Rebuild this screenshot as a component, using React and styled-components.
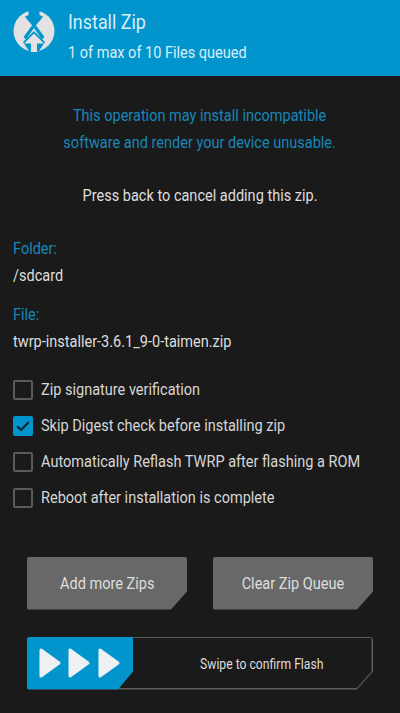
import React from "react";
import styled, { createGlobalStyle } from "styled-components";

const BLUE = "#0295cd";
const DIM = "#1787b9";
const Global = createGlobalStyle`
  html, body { margin: 0; padding: 0; background: #1a1a1a; }
  body { font-family: Roboto, "Liberation Sans", sans-serif; }
`;
const Screen = styled.div`
  width: 400px; height: 713px; background: #1a1a1a; color: #dedede; overflow: hidden;
  display: flex; flex-direction: column;
`;
const Narrow = styled.span`
  display: inline-block; white-space: nowrap; transform: scaleX(0.87);
  transform-origin: ${p => (p.$center ? "center" : "left")};
`;
const Header = styled.header`
  height: 76px; background: ${BLUE}; display: flex; align-items: flex-start;
  padding: 10px 0 0 13px; box-sizing: border-box; gap: 13px; flex: none;
`;
const HeaderText = styled.div`display: flex; flex-direction: column; color: #d9eef7;`;
const Title = styled.div`font-size: 20.6px; line-height: 24px; margin-bottom: 7px;`;
const Subtitle = styled.div`font-size: 16.7px; line-height: 24px;`;
const Warning = styled.div`
  margin-top: 26px; text-align: center; color: ${DIM}; font-size: 16.7px; line-height: 27px;
`;
const Notice = styled.div`margin-top: 28px; text-align: center; font-size: 16.7px; line-height: 24px;`;
const Fields = styled.div`margin-top: 29px; display: flex; flex-direction: column; gap: 15px;`;
const Field = styled.div`
  padding-left: 13px; font-size: 16.7px; line-height: 24px;
  display: flex; flex-direction: column; gap: 2.5px;
`;
const LaterField = styled(Field)`gap: 3px;`;
const Label = styled.div`color: ${DIM};`;
const Options = styled.div`margin-top: 26px; padding-left: 13px; display: flex; flex-direction: column; gap: 16px;`;
const Option = styled.div`display: flex; align-items: center; gap: 8px; height: 20px; font-size: 16.7px; color: #d6d6d6;`;
const Box = styled.span`
  width: 20px; height: 20px; box-sizing: border-box; border-radius: 2px; flex: none;
  border: 2px solid ${p => (p.$on ? BLUE : "#5a5a5a")};
  background: ${p => (p.$on ? BLUE : "transparent")};
  display: flex; align-items: center; justify-content: center;
`;
const Buttons = styled.div`margin-top: 49px; padding: 0 27px; display: flex; justify-content: space-between;`;
const Button = styled.div`
  width: 160px; height: 53px; box-sizing: border-box; padding-top: 1px; background: #686868; color: #dedede; font-size: 16.7px;
  display: flex; align-items: center; justify-content: center; border-radius: 2px;
  clip-path: polygon(0 0, 100% 0, 100% 35px, 144px 100%, 0 100%);
`;
const Track = styled.div`
  position: relative; margin: 27px 0 0 27px; width: 346px; height: 53px; background: #5c5c5c;
  border-radius: 3px; clip-path: polygon(0 0, 100% 0, 100% 35px, 330px 100%, 0 100%);
  display: flex; align-items: center; font-size: 14px;
  &::before {
    content: ""; position: absolute; inset: 1.5px; background: #1a1a1a;
    clip-path: polygon(0 0, 100% 0, 100% 33.5px, 328.4px 100%, 0 100%);
  }
`;
const Thumb = styled.div`
  position: relative; width: 106px; height: 53px; background: ${BLUE}; flex: none; border-radius: 3px 0 0 3px;
  clip-path: polygon(0 0, 100% 0, 100% 35px, 91px 100%, 0 100%);
  display: flex; align-items: center;
`;
const SwipeLabel = styled.div`position: relative; margin-left: 67px; padding-top: 2px; color: #dedede;`;

const Logo = () => (
  <svg width="42" height="42" viewBox="0 0 42 42">
    <circle cx="21" cy="21" r="20.5" fill="#e2e2e2" />
    <path d="M15.5 0 L26.5 0 L26.5 5 L30 6.5 L27.5 10 L21 17 L14.5 10 L12 6.5 L15.5 5Z" fill={BLUE} />
    <path d="M15 9.5 L17.5 8 L31.5 27 L29 29.5Z" fill={BLUE} />
    <path d="M27 9.5 L24.5 8 L10.5 27 L13 29.5Z" fill={BLUE} />
    <path d="M21 21 L32 32 L26 41 L16 41 L10 32Z" fill={BLUE} />
    <path d="M21 23.5 L31 33.5 L24 33.5 L24 42 L18 42 L18 33.5 L11 33.5Z" fill="#e2e2e2" />
  </svg>
);
const Check = () => (
  <svg width="16" height="16" viewBox="0 0 16 16">
    <path d="M2.2 8.2 L6 12 L13.8 4" fill="none" stroke="#14232b" strokeWidth="2" />
  </svg>
);
const Arrows = () => (
  <svg width="106" height="53" viewBox="0 0 106 53">
    {[14, 43, 73].map(x => (
      <path key={x} d={`M${x} 13 L${x + 18} 26 L${x} 39Z`} fill="#eef1f3" stroke="#eef1f3" strokeWidth="3" strokeLinejoin="round" />
    ))}
  </svg>
);

const opts = [
  ["Zip signature verification", false],
  ["Skip Digest check before installing zip", true],
  ["Automatically Reflash TWRP after flashing a ROM", false],
  ["Reboot after installation is complete", false],
];

export default function App() {
  return (
    <Screen>
      <Global />
      <Header>
        <Logo />
        <HeaderText>
          <Title><Narrow>Install Zip</Narrow></Title>
          <Subtitle><Narrow>1 of max of 10 Files queued</Narrow></Subtitle>
        </HeaderText>
      </Header>
      <Warning>
        <Narrow $center>This operation may install incompatible</Narrow><br />
        <Narrow $center>software and render your device unusable.</Narrow>
      </Warning>
      <Notice><Narrow $center>Press back to cancel adding this zip.</Narrow></Notice>
      <Fields>
        <Field>
          <Label><Narrow>Folder:</Narrow></Label>
          <div><Narrow>/sdcard</Narrow></div>
        </Field>
        <LaterField>
          <Label><Narrow>File:</Narrow></Label>
          <div><Narrow>twrp-installer-3.6.1_9-0-taimen.zip</Narrow></div>
        </LaterField>
      </Fields>
      <Options>
        {opts.map(([t, on]) => (
          <Option key={t}><Box $on={on}>{on && <Check />}</Box><Narrow>{t}</Narrow></Option>
        ))}
      </Options>
      <Buttons>
        <Button><Narrow $center>Add more Zips</Narrow></Button>
        <Button><Narrow $center>Clear Zip Queue</Narrow></Button>
      </Buttons>
      <Track>
        <Thumb><Arrows /></Thumb>
        <SwipeLabel><Narrow>Swipe to confirm Flash</Narrow></SwipeLabel>
      </Track>
    </Screen>
  );
}
